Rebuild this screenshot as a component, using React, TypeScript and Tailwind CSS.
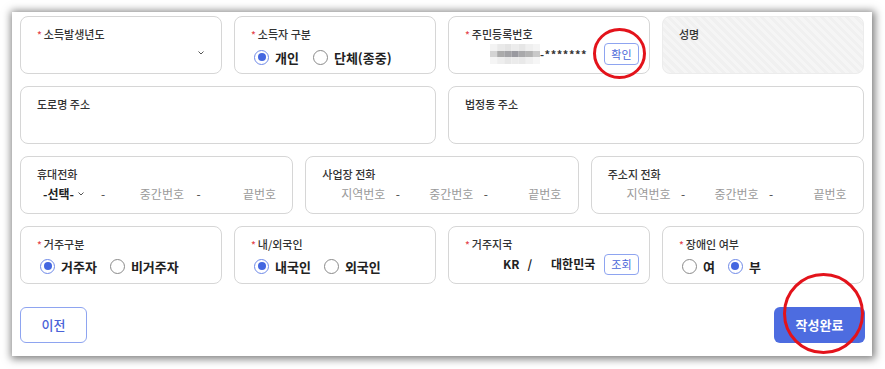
import type { ReactNode } from "react";

const mosaic = [
  ["#f3f3f3", "#e9e9e9", "#e4e4e4", "#ececec", "#e6e6e6", "#efefef", "#f4f4f4"],
  ["#d4d4d4", "#ababab", "#a3a3a6", "#9a9aa0", "#a9a9ab", "#b3b3b3", "#c9c9c9"],
  ["#f5f5f5", "#eeeeee", "#e7e7e7", "#ebebeb", "#e9e9e9", "#f0f0f0", "#f6f6f6"],
];

function Req() {
  return <span className="mr-[2px] inline-block translate-y-[1px] text-[10px] text-[#e5484d]">*</span>;
}

function Chevron() {
  return (
    <svg width="6" height="4" viewBox="0 0 6 4" className="shrink-0">
      <path d="M0.5 0.5 L3 3 L5.5 0.5" fill="none" stroke="#555" strokeWidth="1" />
    </svg>
  );
}

function Card({
  label,
  req,
  children,
  className = "",
}: {
  label: string;
  req?: boolean;
  children?: ReactNode;
  className?: string;
}) {
  return (
    <div className={`flex h-[58px] flex-col rounded-[8px] border px-4 pt-[9px] ${className}`}>
      <div className="flex h-[16px] items-center text-[11px] font-medium leading-[16px] text-[#333]">
        {req && <Req />}
        {label}
      </div>
      <div className="flex h-[24px] items-center whitespace-nowrap">{children}</div>
    </div>
  );
}

function Radio({ checked, label }: { checked?: boolean; label: string }) {
  return (
    <span className="flex items-center">
      {checked ? (
        <span className="flex h-[15px] w-[15px] items-center justify-center rounded-full border border-[#6f8ae8]">
          <span className="h-[8px] w-[8px] rounded-full bg-[#4467e0]" />
        </span>
      ) : (
        <span className="h-[15px] w-[15px] rounded-full border border-[#8a8a8a] bg-white" />
      )}
      <span className="ml-[6px] text-[13px] font-bold leading-none text-[#222]">{label}</span>
    </span>
  );
}

function PhoneFields() {
  return (
    <div className="flex text-[12px] text-[#9a9a9a]">
      <span className="w-[63px] text-right">지역번호</span>
      <span className="w-[25px] text-center text-[#444]">-</span>
      <span className="w-[63px] text-right">중간번호</span>
      <span className="w-[25px] text-center text-[#444]">-</span>
      <span className="w-[63px] text-right">끝번호</span>
    </div>
  );
}

const card = "border-[#d6d6d6] bg-white";

export default function App() {
  return (
    <div className="relative h-[369px] w-[885px] overflow-hidden bg-white font-['Noto_Sans_CJK_KR','Noto_Sans',sans-serif]">
      <div className="ml-[12px] mt-[12px] w-[860px] bg-white px-[8px] pb-[13px] pt-[4px] shadow-[1px_1px_8px_2px_rgba(0,0,0,0.5)]">
        <div className="grid grid-cols-12 gap-[12px]">
          <Card label="소득발생년도" req className={`col-span-3 ${card}`}>
            <span className="ml-auto mr-[1px] mt-[-2px]">
              <Chevron />
            </span>
          </Card>
          <Card label="소득자 구분" req className={`col-span-3 ${card}`}>
            <div className="ml-[3px] mt-[6px] flex gap-[14px]">
              <Radio checked label="개인" />
              <Radio label="단체(종중)" />
            </div>
          </Card>
          <Card label="주민등록번호" req className={`col-span-3 !pr-[10px] ${card}`}>
            <div className="ml-[25px] flex items-center">
              <svg width="50" height="20" viewBox="0 0 50 20">
                {mosaic.map((row, r) =>
                  row.map((c, i) => (
                    <rect key={`${r}-${i}`} x={i * 7.15} y={r === 0 ? 0 : r === 1 ? 7 : 13} width="7.2" height={r === 1 ? 6 : 7} fill={c} />
                  )),
                )}
              </svg>
              <span className="text-[11px] font-bold tracking-[0.5px] text-[#333]">-*******</span>
            </div>
            <span className="ml-auto flex h-[22px] w-[35px] items-center justify-center rounded-[4px] border border-[#8ea4f0] text-[11px] text-[#4a66d9]">
              확인
            </span>
          </Card>
          <Card
            label="성명"
            className="col-span-3 border-[#ececec] bg-[repeating-linear-gradient(45deg,#f0f0f0_0px,#f0f0f0_3px,#f5f5f5_3px,#f5f5f5_6px)]"
          />

          <Card label="도로명 주소" className={`col-span-6 ${card}`} />
          <Card label="법정동 주소" className={`col-span-6 ${card}`} />

          <Card label="휴대전화" className={`col-span-4 ${card}`}>
            <div className="flex text-[12px] text-[#9a9a9a]">
              <span className="flex w-[48px] items-center pl-[6px]">
                <span className="font-bold text-[#222]">-선택-</span>
                <span className="ml-[4px]">
                  <Chevron />
                </span>
              </span>
              <span className="w-[36px] text-center text-[#444]">-</span>
              <span className="w-[63px] text-right">중간번호</span>
              <span className="w-[29px] text-center text-[#444]">-</span>
              <span className="w-[63px] text-right">끝번호</span>
            </div>
          </Card>
          <Card label="사업장 전화" className={`col-span-4 ${card}`}>
            <PhoneFields />
          </Card>
          <Card label="주소지 전화" className={`col-span-4 ${card}`}>
            <PhoneFields />
          </Card>

          <Card label="거주구분" req className={`col-span-3 ${card}`}>
            <div className="ml-[3px] mt-[4px] flex gap-[13px]">
              <Radio checked label="거주자" />
              <Radio label="비거주자" />
            </div>
          </Card>
          <Card label="내/외국인" req className={`col-span-3 ${card}`}>
            <div className="ml-[3px] mt-[4px] flex gap-[13px]">
              <Radio checked label="내국인" />
              <Radio label="외국인" />
            </div>
          </Card>
          <Card label="거주지국" req className={`col-span-3 !pr-[10px] ${card}`}>
            <div className="ml-[38px] flex items-center text-[12px] font-bold text-[#222]">
              <span>KR</span>
              <span className="ml-[8px]">/</span>
              <span className="ml-[19px]">대한민국</span>
            </div>
            <span className="ml-auto flex h-[21px] w-[35px] items-center justify-center rounded-[4px] border border-[#8ea4f0] text-[11px] text-[#4a66d9]">
              조회
            </span>
          </Card>
          <Card label="장애인 여부" req className={`col-span-3 ${card}`}>
            <div className="ml-[3px] mt-[4px] flex gap-[13px]">
              <Radio label="여" />
              <Radio checked label="부" />
            </div>
          </Card>
        </div>

        <div className="mt-[23px] flex items-center justify-between">
          <button className="h-[36px] w-[67px] rounded-[6px] border border-[#8ea4f0] bg-white text-[13px] font-medium text-[#4a62d8]">
            이전
          </button>
          <button className="mr-[-1px] h-[36px] w-[91px] rounded-[6px] bg-[#4d6ce0] text-[13px] font-bold text-white">
            작성완료
          </button>
        </div>
      </div>

      <svg className="pointer-events-none absolute inset-0" width="885" height="369">
        <ellipse cx="619.5" cy="53.5" rx="25" ry="24" fill="none" stroke="#e3131b" strokeWidth="3" />
        <circle cx="823.5" cy="313.5" r="39" fill="none" stroke="#e3131b" strokeWidth="3" />
      </svg>
    </div>
  );
}
